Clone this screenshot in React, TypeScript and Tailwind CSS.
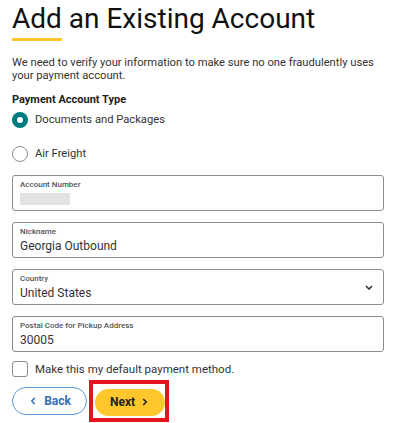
import { ChevronLeft, ChevronRight } from 'lucide-react';

function Field({ label, children, select }: { label: string; children: React.ReactNode; select?: boolean }) {
  return (
    <div className="relative h-[36px] rounded-[3px] border-[1.5px] border-[#8c8c8c] px-[7px] pt-[3px]">
      <div className="text-[8px] font-medium leading-[12px] text-[#555]">{label}</div>
      <div className="text-[12px] leading-[16px] text-[#333]">{children}</div>
      {select && (
        <svg className="absolute right-[10px] top-[15px]" width="8" height="5" viewBox="0 0 8 5" fill="none">
          <path d="M1 1l3 3 3-3" stroke="#333" strokeWidth="1.6" />
        </svg>
      )}
    </div>
  );
}

export default function App() {
  return (
    <div className="min-h-[423px] bg-white font-['Roboto',sans-serif] text-[#222]">
      <div className="w-[384px] pl-[12px] pt-[3px]">
        <h1 className="text-[28px] leading-[32px] text-[#111]">Add an Existing Account</h1>
        <div className="mt-[3px] h-[3px] w-[50px] bg-[#ffc72c]" />

        <p className="mt-[15px] text-[11.2px] leading-[13px] text-[#333]">
          We need to verify your information to make sure no one fraudulently uses your payment account.
        </p>

        <div className="mt-[11px] text-[11px] font-bold leading-[13px] text-[#222]">Payment Account Type</div>

        <div className="mt-[6px] flex items-center gap-[7px]">
          <span className="flex h-[16px] w-[16px] items-center justify-center rounded-full bg-[#007b7f]">
            <span className="h-[6px] w-[6px] rounded-full bg-white" />
          </span>
          <span className="text-[11.2px] text-[#333]">Documents and Packages</span>
        </div>

        <div className="mt-[17px] flex items-center gap-[7px]">
          <span className="h-[16px] w-[16px] rounded-full border-[1.5px] border-[#8c8c8c]" />
          <span className="text-[11.2px] text-[#333]">Air Freight</span>
        </div>

        <div className="mt-[12px] flex flex-col gap-[11px]">
          <Field label="Account Number">
            <div className="mt-[2px] h-[12px] w-[50px] bg-[#e3e3e3]" />
          </Field>
          <Field label="Nickname">Georgia Outbound</Field>
          <Field label="Country" select>
            United States
          </Field>
          <Field label="Postal Code for Pickup Address">30005</Field>
        </div>

        <div className="mt-[9px] flex items-center gap-[7px]">
          <span className="h-[16px] w-[16px] rounded-[3px] border-[1.5px] border-[#8c8c8c]" />
          <span className="text-[11.5px] leading-[17px] text-[#333]">Make this my default payment method.</span>
        </div>

        <div className="mt-[2px] flex items-center">
          <button className="flex h-[28px] w-[75px] items-center justify-center gap-[6px] rounded-full border-[1.5px] border-[#5a9ad9] text-[12px] font-bold text-[#2f6fb7]">
            <ChevronLeft className="h-[10px] w-[10px]" strokeWidth={4} />
            Back
          </button>
          <div className="ml-[2px] border-[4px] border-[#e3141c] pb-[2px] pl-[2px] pt-[5px]">
            <button className="flex h-[27px] w-[70px] items-center justify-center gap-[5px] rounded-full bg-[#ffc72c] text-[12px] font-bold text-[#222]">
              Next
              <ChevronRight className="h-[10px] w-[10px]" strokeWidth={4} />
            </button>
          </div>
        </div>
      </div>
    </div>
  );
}
